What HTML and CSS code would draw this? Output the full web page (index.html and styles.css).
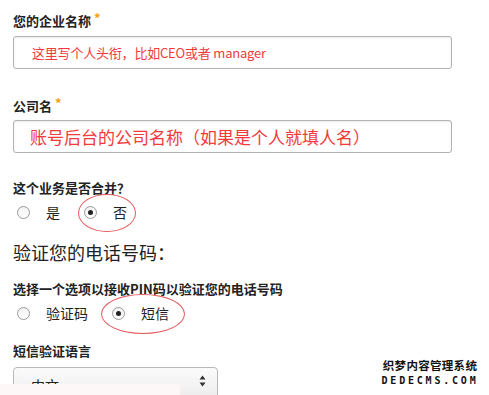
FILE: index.html
```html
<!DOCTYPE html>
<html lang="zh">
<head>
<meta charset="utf-8">
<title>表单</title>
<link rel="stylesheet" href="styles.css">
</head>
<body>
<form class="form">
  <label class="label l1">您的企业名称<span class="star">*</span></label>
  <input class="field f1" type="text" placeholder="这里写个人头衔，比如CEO或者 manager">

  <label class="label l2">公司名<span class="star">*</span></label>
  <input class="field f2" type="text" placeholder="账号后台的公司名称（如果是个人就填人名）">

  <div class="label l3">这个业务是否合并？</div>
  <div class="radios r1">
    <span class="opt"><span class="radio"></span><span class="otext">是</span></span>
    <span class="opt"><span class="radio checked"></span><span class="otext">否</span></span>
    <span class="ellipse e1"></span>
  </div>

  <h2 class="heading">验证您的电话号码：</h2>

  <div class="label l4">选择一个选项以接收PIN码以验证您的电话号码</div>
  <div class="radios r2">
    <span class="opt"><span class="radio"></span><span class="otext">验证码</span></span>
    <span class="opt"><span class="radio checked"></span><span class="otext">短信</span></span>
    <span class="ellipse e2"></span>
  </div>

  <div class="label l5">短信验证语言</div>
  <div class="select">
    <span class="sel-text">中文</span>
    <svg class="sel-arrows" width="7" height="12" viewBox="0 0 7 12"><path d="M3.5 0.5 L6.5 4.5 L0.5 4.5 Z M0.5 7.5 L6.5 7.5 L3.5 11.5 Z" fill="#333"/></svg>
  </div>
</form>
<div class="cover"></div>
<div class="watermark">
  <div class="wm1">织梦内容管理系统</div>
  <div class="wm2">DEDECMS.COM</div>
</div>
</body>
</html>
```

FILE: styles.css
```css
html, body {
  margin: 0;
  padding: 0;
  background: #ffffff;
  overflow: hidden;
}
body {
  width: 489px;
  height: 395px;
  position: relative;
  font-family: "Noto Sans CJK SC", "Noto Sans", sans-serif;
  color: #222;
}
.form {
  display: flex;
  flex-direction: column;
  align-items: flex-start;
  padding-left: 13px;
}
.label {
  display: block;
  font-size: 13px;
  line-height: 16px;
  font-weight: 700;
  color: #222;
}
.star {
  color: #f0a10a;
  font-size: 13px;
  font-weight: 700;
  margin-left: 3px;
  position: relative;
  top: -3px;
}
.l1 { margin-top: 13px; }
.l2 { margin-top: 29px; }
.l3 { margin-top: 27px; }
.l4 { margin-top: 17px; }
.l5 { margin-top: 18px; }

.field {
  box-sizing: border-box;
  width: 439px;
  height: 33px;
  border: 1px solid #b2b2b2;
  border-radius: 3px;
  box-shadow: inset 0 1px 2px rgba(0,0,0,0.08);
  background: #fff;
  font-family: "Noto Sans CJK SC", "Noto Sans", sans-serif;
  outline: none;
  margin: 0;
}
.field::placeholder { color: #f23a3a; opacity: 1; }
.f1 {
  margin-top: 7px;
  padding: 0 0 0 18px;
  font-size: 13px;
  letter-spacing: -0.2px;
}
.f2 {
  margin-top: 6px;
  padding: 0 0 0 16px;
  font-size: 17px;
}

.radios {
  position: relative;
  display: flex;
  align-items: center;
  gap: 24px;
  height: 24px;
}
.r1 { margin-top: 4px; }
.r2 { margin-top: 4px; }
.opt {
  display: flex;
  align-items: center;
  gap: 16px;
  font-size: 14px;
  line-height: 24px;
  color: #222;
}
.opt:first-child { margin-left: 4px; }
.radio {
  box-sizing: border-box;
  width: 13px;
  height: 13px;
  border: 1px solid #9a9a9a;
  border-radius: 50%;
  background: linear-gradient(#f2f2f2, #ffffff);
  display: flex;
  align-items: center;
  justify-content: center;
}
.radio.checked::after {
  content: "";
  width: 5px;
  height: 5px;
  border-radius: 50%;
  background: #222;
}
.ellipse {
  position: absolute;
  border: 1px solid #e45a5a;
  border-radius: 50%;
}
.e1 { left: 65px; top: -6px; width: 56px; height: 36px; }
.e2 { left: 88px; top: -7px; width: 82px; height: 38px; }

.heading {
  margin: 16px 0 0 0;
  font-size: 18px;
  line-height: 24px;
  font-weight: 400;
  color: #222;
}

.select {
  box-sizing: border-box;
  margin-top: 8px;
  width: 205px;
  height: 34px;
  border: 1px solid #b8b8b8;
  border-radius: 4px;
  background: linear-gradient(#fbfbfb, #ececec);
  display: flex;
  align-items: center;
  justify-content: space-between;
  padding: 0 11px 0 17px;
  font-size: 14px;
  color: #222;
}
.sel-arrows {
  position: relative;
  top: -3px;
}
.sel-text { position: relative; top: 1px; }

.cover {
  position: absolute;
  left: 0;
  top: 384px;
  width: 180px;
  height: 11px;
  background: #fdf7f7;
}
.watermark {
  position: absolute;
  left: 379px;
  top: 357px;
  width: 102px;
  text-align: center;
  color: #111;
  font-weight: 700;
  text-shadow: 0 0 1px #fff;
}
.wm1 {
  font-size: 11.5px;
  line-height: 17px;
  letter-spacing: 0.3px;
}
.wm2 {
  font-family: "DejaVu Sans Mono", monospace;
  font-size: 10px;
  line-height: 13px;
  letter-spacing: 2.8px;
}
```
